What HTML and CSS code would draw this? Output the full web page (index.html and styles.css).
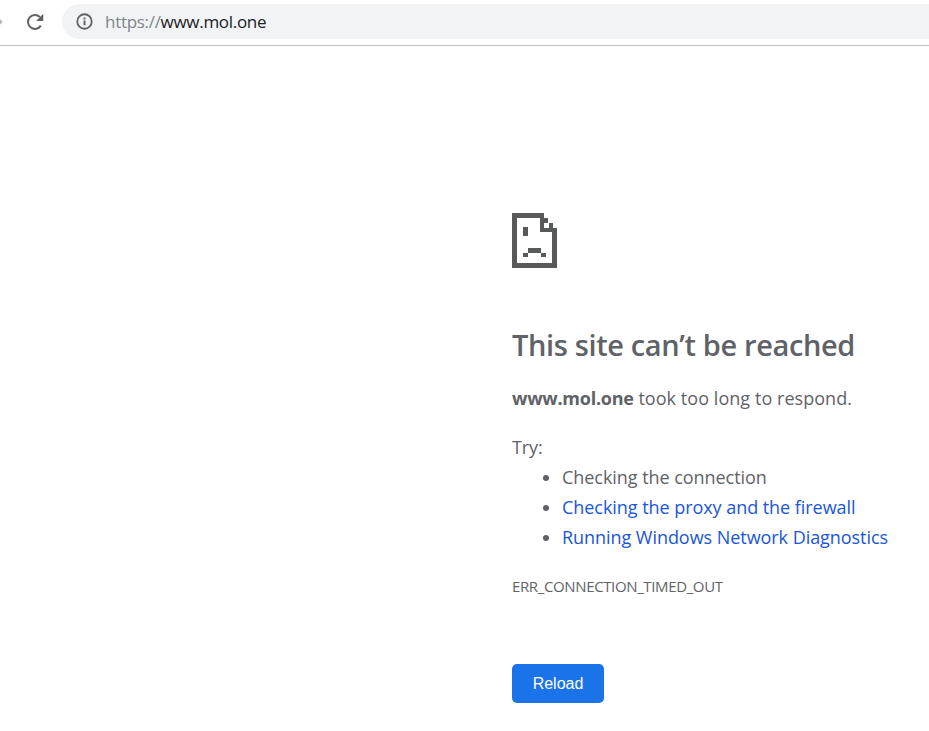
FILE: index.html
```
<!DOCTYPE html>
<html lang="en">
<head>
<meta charset="utf-8">
<title>www.mol.one</title>
<link rel="stylesheet" href="styles.css">
</head>
<body>
<header class="toolbar">
  <svg class="nav-forward" width="6" height="10" viewBox="0 0 6 10"><path d="M0 1.500L3.500 5L0 8.500" fill="none" stroke="#b4b6b8" stroke-width="1.800"/></svg>
  <svg class="reload-icon" width="22" height="22" viewBox="0 0 20 20"><path d="M15.300 13.300A6.300 6.300 0 1 1 14.400 5.500" fill="none" stroke="#5f6368" stroke-width="1.800"/><path d="M17.500 2.500V9H11z" fill="#5f6368"/></svg>
  <div class="omnibox">
    <svg class="info-icon" width="17" height="17" viewBox="0 0 16 16"><circle cx="8" cy="8" r="6.800" fill="none" stroke="#5f6368" stroke-width="1.700"/><rect x="7.100" y="7" width="1.800" height="4.500" fill="#5f6368"/><rect x="7.100" y="4.300" width="1.800" height="1.800" fill="#5f6368"/></svg>
    <span class="url"><span class="scheme">https://</span>www.mol.one</span>
  </div>
</header>
<main class="content">
  <svg class="sad-icon" width="45" height="55" viewBox="0 0 45 55" shape-rendering="crispEdges" fill="#58595b">
    <rect x="0" y="0" width="32" height="5"/>
    <rect x="0" y="0" width="5" height="55"/>
    <rect x="0" y="50" width="45" height="5"/>
    <rect x="40" y="18" width="5" height="37"/>
    <rect x="28" y="0" width="4" height="19"/>
    <rect x="28" y="15" width="17" height="4"/>
    <rect x="32" y="5" width="4" height="5"/>
    <rect x="37" y="10" width="4" height="5"/>
    <rect x="11" y="14" width="5" height="9"/>
    <rect x="16" y="35" width="13" height="5"/>
    <rect x="11" y="40" width="5" height="4"/>
    <rect x="29" y="40" width="5" height="4"/>
  </svg>
  <h1 class="title">This site can’t be reached</h1>
  <p class="summary"><strong>www.mol.one</strong> took too long to respond.</p>
  <p class="try">Try:</p>
  <ul class="suggestions">
    <li>Checking the connection</li>
    <li><a href="#">Checking the proxy and the firewall</a></li>
    <li><a href="#">Running Windows Network Diagnostics</a></li>
  </ul>
  <p class="code">ERR_CONNECTION_TIMED_OUT</p>
  <button class="reload" type="button">Reload</button>
</main>
</body>
</html>
```
FILE: styles.css
```
html, body {
  margin: 0;
  padding: 0;
  background: #fff;
  overflow: hidden;
}
body {
  height: 731px;
  font-family: "Open Sans", "Noto Sans", sans-serif;
  color: #5f6368;
}
.toolbar {
  height: 46px;
  box-sizing: border-box;
  border-bottom: 1px solid #bdbdbd;
  display: flex;
  align-items: flex-start;
  padding-top: 4px;
}
.nav-forward {
  margin: 13px 0 0 -2px;
}
.reload-icon {
  margin: 7px 0 0 20px;
}
.omnibox {
  margin-left: 16px;
  flex: 1;
  height: 35px;
  background: #f1f3f4;
  border-radius: 18px 0 0 18px;
  display: flex;
  align-items: center;
  padding-left: 14px;
}
.url {
  margin-left: 12px;
  font-size: 17px;
  color: #202124;
  letter-spacing: -0.3px;
}
.scheme {
  color: #80868b;
}
.content {
  padding: 167px 0 0 512px;
  white-space: nowrap;
}
.sad-icon {
  display: block;
}
.title {
  margin: 59px 0 0;
  font-size: 29px;
  line-height: 36px;
  font-weight: 600;
  letter-spacing: -0.37px;
}
.summary {
  margin: 20px 0 0;
  font-size: 18px;
  line-height: 30px;
  letter-spacing: 0.05px;
}
.summary strong {
  font-weight: 700;
  letter-spacing: -0.25px;
}
.try {
  margin: 19px 0 0;
  font-size: 18px;
  line-height: 30px;
  letter-spacing: -0.1px;
}
.suggestions {
  margin: 0;
  padding: 0 0 0 50px;
  font-size: 18px;
  line-height: 30px;
  letter-spacing: -0.05px;
}
.suggestions a {
  color: #1a56db;
  text-decoration: none;
}
.code {
  margin: 24px 0 0;
  font-size: 15px;
  line-height: 20px;
  letter-spacing: -0.37px;
}
.reload {
  display: block;
  margin: 68px 0 0;
  width: 92px;
  height: 39px;
  border: 0;
  border-radius: 5px;
  background: #1a73e8;
  color: #fff;
  font-family: "Liberation Sans", sans-serif;
  font-size: 16px;
}
```
